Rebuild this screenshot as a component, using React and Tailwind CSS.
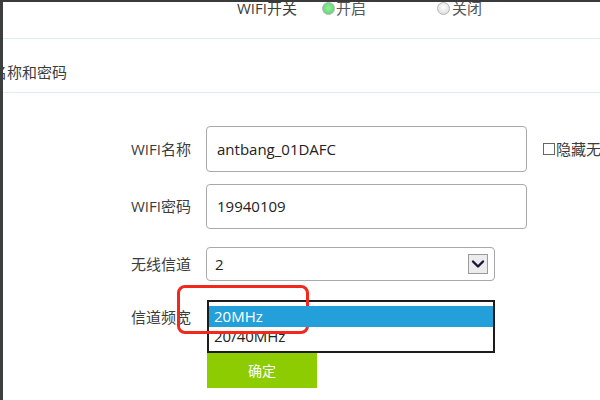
import React from "react";

const font = "font-['Open_Sans','Noto_Sans_CJK_SC',sans-serif]";

function Radio({ on }) {
  return (
    <span
      className={
        "inline-block w-[13px] h-[13px] rounded-full border border-[#b5b5b5] " +
        (on
          ? "bg-[radial-gradient(circle_at_50%_45%,#8ef29a_0%,#6fdc7e_60%,#5cc66c_100%)]"
          : "bg-[radial-gradient(circle_at_50%_40%,#ffffff_0%,#e6e6e6_60%,#cfcfcf_100%)]")
      }
    />
  );
}

export default function App() {
  return (
    <div className={"relative w-[600px] h-[400px] overflow-hidden bg-[#3a3a3a] flex flex-col " + font}>
      <div className="h-[2px] shrink-0" />
      <div className="flex flex-1 min-h-0">
        <div className="w-[3px] shrink-0 bg-[#3d3f3f]" />
        <div className="flex-1 bg-white overflow-hidden flex flex-col text-[15px] text-[#3c3c3c]">
          {/* header row */}
          <div className="h-[37px] shrink-0 border-b border-[#ddeef4] flex items-start pl-[234px]">
            <div className="flex items-center -mt-[3px] leading-[18px]">
              <span className="w-[85px]">WIFI开关</span>
              <div className="w-[115px] flex items-center">
                <Radio on />
                <span className="ml-[1px] text-[#555]">开启</span>
              </div>
              <div className="flex items-center">
                <Radio />
                <span className="ml-[2px] text-[#555]">关闭</span>
              </div>
            </div>
          </div>
          {/* section title */}
          <div className="h-[54px] shrink-0 border-b border-[#ddeef4] flex items-center pt-[13px]">
            <span className="-ml-[11px] whitespace-nowrap">名称和密码</span>
          </div>
          {/* form */}
          <div className="pl-[128px] pt-[33px] flex flex-col">
            <div className="flex items-center">
              <span className="w-[75px] shrink-0">WIFI名称</span>
              <div className="w-[321px] h-[46px] shrink-0 border border-[#a9a9a9] rounded-[4px] flex items-center pl-[10px] text-[#222]">
                antbang_01DAFC
              </div>
              <span className="ml-[16px] w-[12px] h-[12px] shrink-0 border border-[#666] bg-white" />
              <span className="ml-[1px] whitespace-nowrap">隐藏无线</span>
            </div>
            <div className="flex items-center mt-[12px]">
              <span className="w-[75px] shrink-0">WIFI密码</span>
              <div className="w-[321px] h-[45px] shrink-0 border border-[#a9a9a9] rounded-[4px] flex items-center pl-[10px] text-[#222]">
                19940109
              </div>
            </div>
            <div className="flex items-center mt-[18px]">
              <span className="w-[75px] shrink-0">无线信道</span>
              <div className="w-[289px] h-[34px] shrink-0 border border-[#a9a9a9] rounded-[4px] flex items-center justify-between pl-[8px] pr-[6px] text-[#222]">
                <span>2</span>
                <span className="w-[20px] h-[20px] border border-[#9a9a9a] bg-[#ececec] flex items-center justify-center">
                  <svg width="14" height="10" viewBox="0 0 14 10">
                    <path d="M2 2.5 L7 7.5 L12 2.5" fill="none" stroke="#16163a" strokeWidth="2.4" strokeLinecap="round" strokeLinejoin="round" />
                  </svg>
                </span>
              </div>
            </div>
            <div className="flex items-start mt-[19px]">
              <span className="w-[76px] shrink-0 pt-[7px] leading-[20px]">信道频宽</span>
              <div className="w-[288px] h-[53px] shrink-0 border-2 border-[#1c1c1c] bg-white pt-[4px] text-[#222]">
                <div className="h-[21px] bg-[#239fd9] text-white leading-[21px] pl-[5px] relative z-10">20MHz</div>
                <div className="leading-[19px] pl-[5px]">20/40MHz</div>
              </div>
            </div>
            <div className="pl-[76px]">
              <div className="w-[110px] h-[35px] bg-[#8ccc00] text-white text-[14px] flex items-center justify-center">
                确定
              </div>
            </div>
          </div>
        </div>
      </div>
      {/* red annotation box */}
      <div className="absolute left-[177px] top-[285px] w-[132px] h-[49px] border-[3px] border-[#f3281d] rounded-[8px]" />
    </div>
  );
}
